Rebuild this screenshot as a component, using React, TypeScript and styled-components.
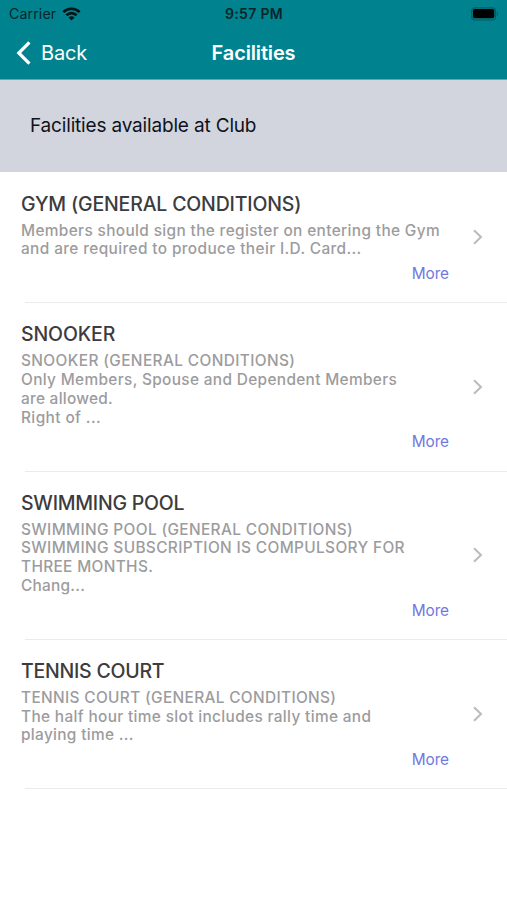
import React from 'react';
import styled, { createGlobalStyle } from 'styled-components';

const GlobalStyle = createGlobalStyle`
  * { box-sizing: border-box; }
  body { margin: 0; background: #fff; font-family: Inter, 'Noto Sans', sans-serif; }
`;

const Screen = styled.main`
  width: 507px;
  height: 900px;
  overflow: hidden;
  background: #fff;
`;

const Header = styled.header`
  height: 80px;
  background: #00838f;
  border-bottom: 1px solid #55adb6;
`;

const StatusBar = styled.div`
  height: 27px;
  padding: 0 8px 0 9px;
  display: grid;
  grid-template-columns: 1fr auto 1fr;
  align-items: center;
  color: #06262a;
`;

const Carrier = styled.div`
  display: flex;
  align-items: center;
  gap: 6px;
  font-size: 14.2px;
  letter-spacing: 0.1px;
`;

const Clock = styled.div`
  font-size: 14px;
  font-weight: 600;
  letter-spacing: 0.35px;
`;

const BatteryIcon = styled.svg`
  justify-self: end;
`;

const NavBar = styled.nav`
  height: 51px;
  padding: 0 16px;
  display: grid;
  grid-template-columns: 1fr auto 1fr;
  align-items: center;
  color: #fff;
`;

const BackButton = styled.button`
  display: flex;
  align-items: center;
  gap: 10px;
  padding: 0;
  border: 0;
  background: none;
  color: inherit;
  font: 400 20px Inter, sans-serif;
  letter-spacing: -0.15px;
`;

const NavTitle = styled.h1`
  margin: 0;
  font-size: 20px;
  font-weight: 600;
  letter-spacing: -0.15px;
`;

const Banner = styled.div`
  height: 92px;
  padding: 0 30px 2px;
  display: flex;
  align-items: center;
  background: #d2d5de;
  color: #10121a;
  font-size: 19px;
  letter-spacing: -0.17px;
`;

const List = styled.ul`
  margin: 0;
  padding: 0.6px 0 0;
  list-style: none;
`;

const Row = styled.li<{ $lines: number }>`
  height: ${(p) => 93.1 + p.$lines * 18.8}px;
  padding: 19px 23px 0 21px;
  display: grid;
  grid-template-columns: 428px 1fr;
  background: linear-gradient(#ebebec, #ebebec) 25px 100% / 100% 1px no-repeat;
`;

const RowBody = styled.div`
  display: flex;
  flex-direction: column;
`;

const RowTitle = styled.h2<{ $tracking: number }>`
  margin: 0 0 5px;
  font-size: 19.5px;
  line-height: 25px;
  font-weight: 550;
  color: #3c3c3e;
  letter-spacing: ${(p) => p.$tracking}px;
`;

const Line = styled.span<{ $tracking: number }>`
  height: 18.8px;
  line-height: 18.8px;
  font-size: 15.4px;
  font-weight: 550;
  white-space: nowrap;
  color: #9c9c9e;
  letter-spacing: ${(p) => p.$tracking}px;
`;

const MoreLink = styled.a`
  align-self: flex-end;
  margin-top: 5px;
  line-height: 20px;
  font-size: 15.4px;
  letter-spacing: -0.1px;
  color: #7278df;
`;

const Chevron = styled.svg`
  align-self: center;
  justify-self: end;
  margin-bottom: 20px;
`;

type TextLine = [text: string, tracking: number];

const facilities: { title: TextLine; lines: TextLine[] }[] = [
  {
    title: ['GYM (GENERAL CONDITIONS)', -0.17],
    lines: [
      ['Members should sign the register on entering the Gym', 0.36],
      ['and are required to produce their I.D. Card...', 0.38],
    ],
  },
  {
    title: ['SNOOKER', -0.12],
    lines: [
      ['SNOOKER (GENERAL CONDITIONS)', 0.39],
      ['Only Members, Spouse and Dependent Members', 0.34],
      ['are allowed.', 0.27],
      ['Right of ...', 0.4],
    ],
  },
  {
    title: ['SWIMMING POOL', -0.24],
    lines: [
      ['SWIMMING POOL (GENERAL CONDITIONS)', 0.36],
      ['SWIMMING SUBSCRIPTION IS COMPULSORY FOR', 0.36],
      ['THREE MONTHS.', 0.34],
      ['Chang...', 0.25],
    ],
  },
  {
    title: ['TENNIS COURT', -0.24],
    lines: [
      ['TENNIS COURT (GENERAL CONDITIONS)', 0.35],
      ['The half hour time slot includes rally time and', 0.35],
      ['playing time ...', 0.33],
    ],
  },
];

export default function App() {
  return (
    <Screen>
      <GlobalStyle />
      <Header>
        <StatusBar>
          <Carrier>
            Carrier
            <svg width="19" height="14" viewBox="0 0 18 14" fill="none" stroke="#001518" strokeWidth="2.7">
              <path d="M0.9 5.1a11.5 11.5 0 0 1 16.2 0" />
              <path d="M3.9 8.3a7.2 7.2 0 0 1 10.2 0" />
              <path d="M9 13.6 6 10.6a4.3 4.3 0 0 1 6 0Z" fill="#001518" stroke="none" />
            </svg>
          </Carrier>
          <Clock>9:57 PM</Clock>
          <BatteryIcon width="29" height="14" viewBox="0 0 29 14">
            <rect x="1.6" y="0.8" width="24" height="12.2" rx="3.5" fill="none" stroke="#035b64" strokeWidth="1.2" />
            <rect x="2.9" y="2.1" width="21.4" height="9.2" rx="2" fill="#000" />
            <path d="M27 4.8a2.4 2.4 0 0 1 0 4.2Z" fill="#035b64" />
          </BatteryIcon>
        </StatusBar>
        <NavBar>
          <BackButton>
            <svg width="15" height="24" viewBox="0 0 15 24" fill="none" stroke="currentColor" strokeWidth="3.2">
              <path d="M13.4 1.4 2.8 12l10.6 10.6" />
            </svg>
            Back
          </BackButton>
          <NavTitle>Facilities</NavTitle>
        </NavBar>
      </Header>
      <Banner>Facilities available at Club</Banner>
      <List>
        {facilities.map(({ title, lines }) => (
          <Row key={title[0]} $lines={lines.length}>
            <RowBody>
              <RowTitle $tracking={title[1]}>{title[0]}</RowTitle>
              {lines.map(([text, tracking]) => (
                <Line key={text} $tracking={tracking}>
                  {text}
                </Line>
              ))}
              <MoreLink>More</MoreLink>
            </RowBody>
            <Chevron width="12" height="16" viewBox="0 0 12 16" fill="none" stroke="#bcbcc0" strokeWidth="2.1">
              <path d="M2 1.2 9 8l-7 6.8" />
            </Chevron>
          </Row>
        ))}
      </List>
    </Screen>
  );
}
